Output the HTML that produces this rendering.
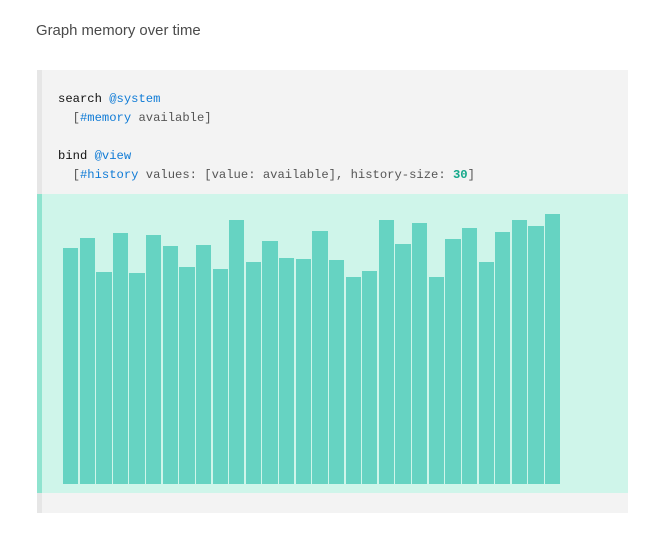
<!DOCTYPE html>
<html><head><style>
body{margin:0;width:664px;height:556px;background:#fff;position:relative;font-family:"Liberation Sans",sans-serif;overflow:hidden}
.t{position:absolute;left:36px;top:23px;font-size:14.9px;color:#4a4a4a}
.blk{position:absolute;left:37px;top:70px;width:591px;height:443px;background:#f3f3f3;border-left:5px solid #e6e6e6;box-sizing:border-box}
pre{position:absolute;left:58px;top:90px;margin:0;font-family:"Liberation Mono",monospace;font-size:12.2px;line-height:19px;color:#111}
.g{color:#555}.b{color:#0f7bd6}.n{color:#14a88a;font-weight:bold}
.gr{position:absolute;left:37px;top:194px;width:591px;height:299px;background:#cff5ea;border-left:5px solid #8fe3cf;box-sizing:border-box}
.bar{position:absolute;background:#66d3c2;width:15.3px;bottom:72px}
</style></head><body>
<div class="t">Graph memory over time</div>
<div class="blk"></div>
<pre>search <span class="b">@system</span>
  <span class="g">[</span><span class="b">#memory</span><span class="g"> available]</span>

bind <span class="b">@view</span>
  <span class="g">[</span><span class="b">#history</span><span class="g"> values: [value: available], history-size: </span><span class="n">30</span><span class="g">]</span></pre>
<div class="gr"></div>
<div id="bars"></div>
<script>
var tops=[248,238,272,233,273,235,246,267,245,269,220,262,241,258,259,231,260,277,271,220,244,223,277,239,228,262,232,220,226,214];
var h='';for(var i=0;i<30;i++){var x=63+i*16.62;h+='<div class="bar" style="left:'+x+'px;top:'+tops[i]+'px;height:'+(484-tops[i])+'px"></div>';}
document.getElementById('bars').innerHTML=h;
</script>
</body></html>
